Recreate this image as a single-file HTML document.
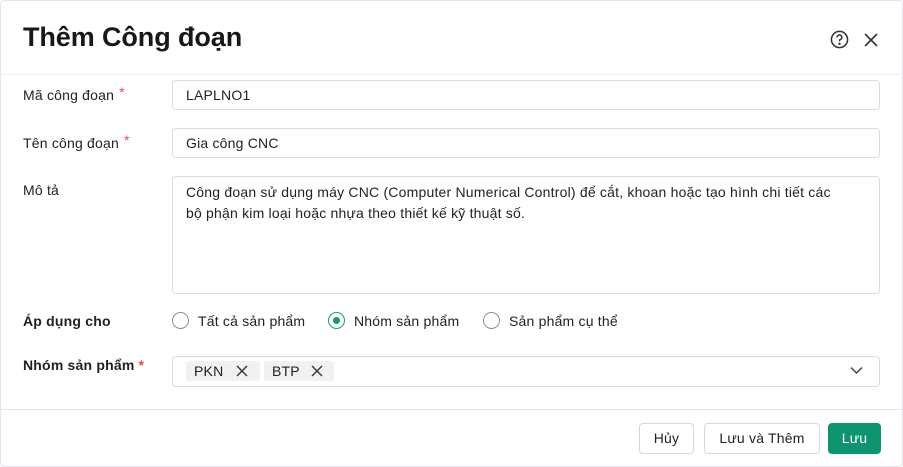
<!DOCTYPE html>
<html><head><meta charset="utf-8"><style>
*{box-sizing:border-box;margin:0;padding:0}
body{width:903px;height:467px;background:#fff;font-family:"Liberation Sans",sans-serif;color:#1f2328;position:relative;overflow:hidden;letter-spacing:0.2px}
.frame{position:absolute;left:0;top:0;width:903px;height:467px;border:1px solid #e3e5e8;border-radius:4px}
h1{position:absolute;left:23px;top:22px;font-size:27px;font-weight:700;color:#16181b;letter-spacing:-0.1px}
.hl{position:absolute;left:0;right:0;height:1px;background:#eceef0}
.lbl{position:absolute;left:23px;font-size:14px;color:#222}
.req{color:#e5484d;font-size:14px;vertical-align:top;margin-left:5px;position:relative;top:-3px}
.inp{position:absolute;left:172px;width:708px;border:1px solid #d9dce0;border-radius:4px;font-size:14px;padding-left:13px;color:#222}
.radio{position:absolute;top:312px;font-size:14px;display:flex;align-items:center;color:#222}
.rc{width:17px;height:17px;border:1.3px solid #8a8f96;border-radius:50%;margin-right:9px;position:relative}
.rc.on{border-color:#1a9a6c}
.rc.on::after{content:"";position:absolute;left:3.5px;top:3.5px;width:7px;height:7px;border-radius:50%;background:#1a9a6c}
.tag{position:absolute;top:361px;height:20px;background:#f0f1f3;border-radius:3px;font-size:14px;line-height:20px;padding-left:8px;color:#222}
.btn{position:absolute;top:423px;height:31px;border:1px solid #d4d7db;border-radius:4px;font-size:14px;line-height:29px;text-align:center;color:#222;background:#fff}
</style></head><body>
<div class="frame"></div>
<h1>Thêm Công đoạn</h1>
<svg style="position:absolute;left:830px;top:30px" width="19" height="19" viewBox="0 0 20 20" fill="none" stroke="#333" stroke-width="1.6"><circle cx="10" cy="10" r="8.5"/><path d="M7.5 7.8a2.5 2.5 0 1 1 3.3 2.3c-.6.3-.8.7-.8 1.4v.5"/><circle cx="10" cy="14.6" r=".5" fill="#333"/></svg>
<svg style="position:absolute;left:864px;top:33px" width="14" height="14" viewBox="0 0 14 14" stroke="#333" stroke-width="1.6"><path d="M1 1L13 13M13 1L1 13"/></svg>
<div class="hl" style="top:74px"></div>
<div class="lbl" style="top:87px">Mã công đoạn<span class="req">*</span></div>
<div class="inp" style="top:80px;height:30px;line-height:28px">LAPLNO1</div>
<div class="lbl" style="top:135px">Tên công đoạn<span class="req">*</span></div>
<div class="inp" style="top:128px;height:30px;line-height:28px">Gia công CNC</div>
<div class="lbl" style="top:182px">Mô tả</div>
<div class="inp" style="top:176px;height:118px;line-height:21px;padding-top:5px;padding-right:14px">Công đoạn sử dụng máy CNC (Computer Numerical Control) để cắt, khoan hoặc tạo hình chi tiết các<br>bộ phận kim loại hoặc nhựa theo thiết kế kỹ thuật số.</div>
<div class="lbl" style="top:313px;font-weight:700">Áp dụng cho</div>
<div class="radio" style="left:172px"><span class="rc"></span>Tất cả sản phẩm</div>
<div class="radio" style="left:328px"><span class="rc on"></span>Nhóm sản phẩm</div>
<div class="radio" style="left:483px"><span class="rc"></span>Sản phẩm cụ thể</div>
<div class="lbl" style="top:357px;font-weight:700">Nhóm sản phẩm<span class="req" style="top:0;margin-left:4px;vertical-align:baseline">*</span></div>
<div class="inp" style="top:356px;height:31px"></div>
<div class="tag" style="left:186px;width:74px">PKN<svg style="position:absolute;left:50px;top:4px" width="12" height="12" viewBox="0 0 12 12" stroke="#333" stroke-width="1.4"><path d="M1 1L11 11M11 1L1 11"/></svg></div>
<div class="tag" style="left:264px;width:70px">BTP<svg style="position:absolute;left:47px;top:4px" width="12" height="12" viewBox="0 0 12 12" stroke="#333" stroke-width="1.4"><path d="M1 1L11 11M11 1L1 11"/></svg></div>
<svg style="position:absolute;left:850px;top:366px" width="13" height="9" viewBox="0 0 13 9" fill="none" stroke="#444" stroke-width="1.5"><path d="M1 1.5L6.5 7L12 1.5"/></svg>
<div class="hl" style="top:409px;background:#e3e5e8"></div>
<div class="btn" style="left:639px;width:55px">Hủy</div>
<div class="btn" style="left:704px;width:116px">Lưu và Thêm</div>
<div class="btn" style="left:828px;width:53px;background:#0e9570;border-color:#0e9570;color:#fff">Lưu</div>
</body></html>
